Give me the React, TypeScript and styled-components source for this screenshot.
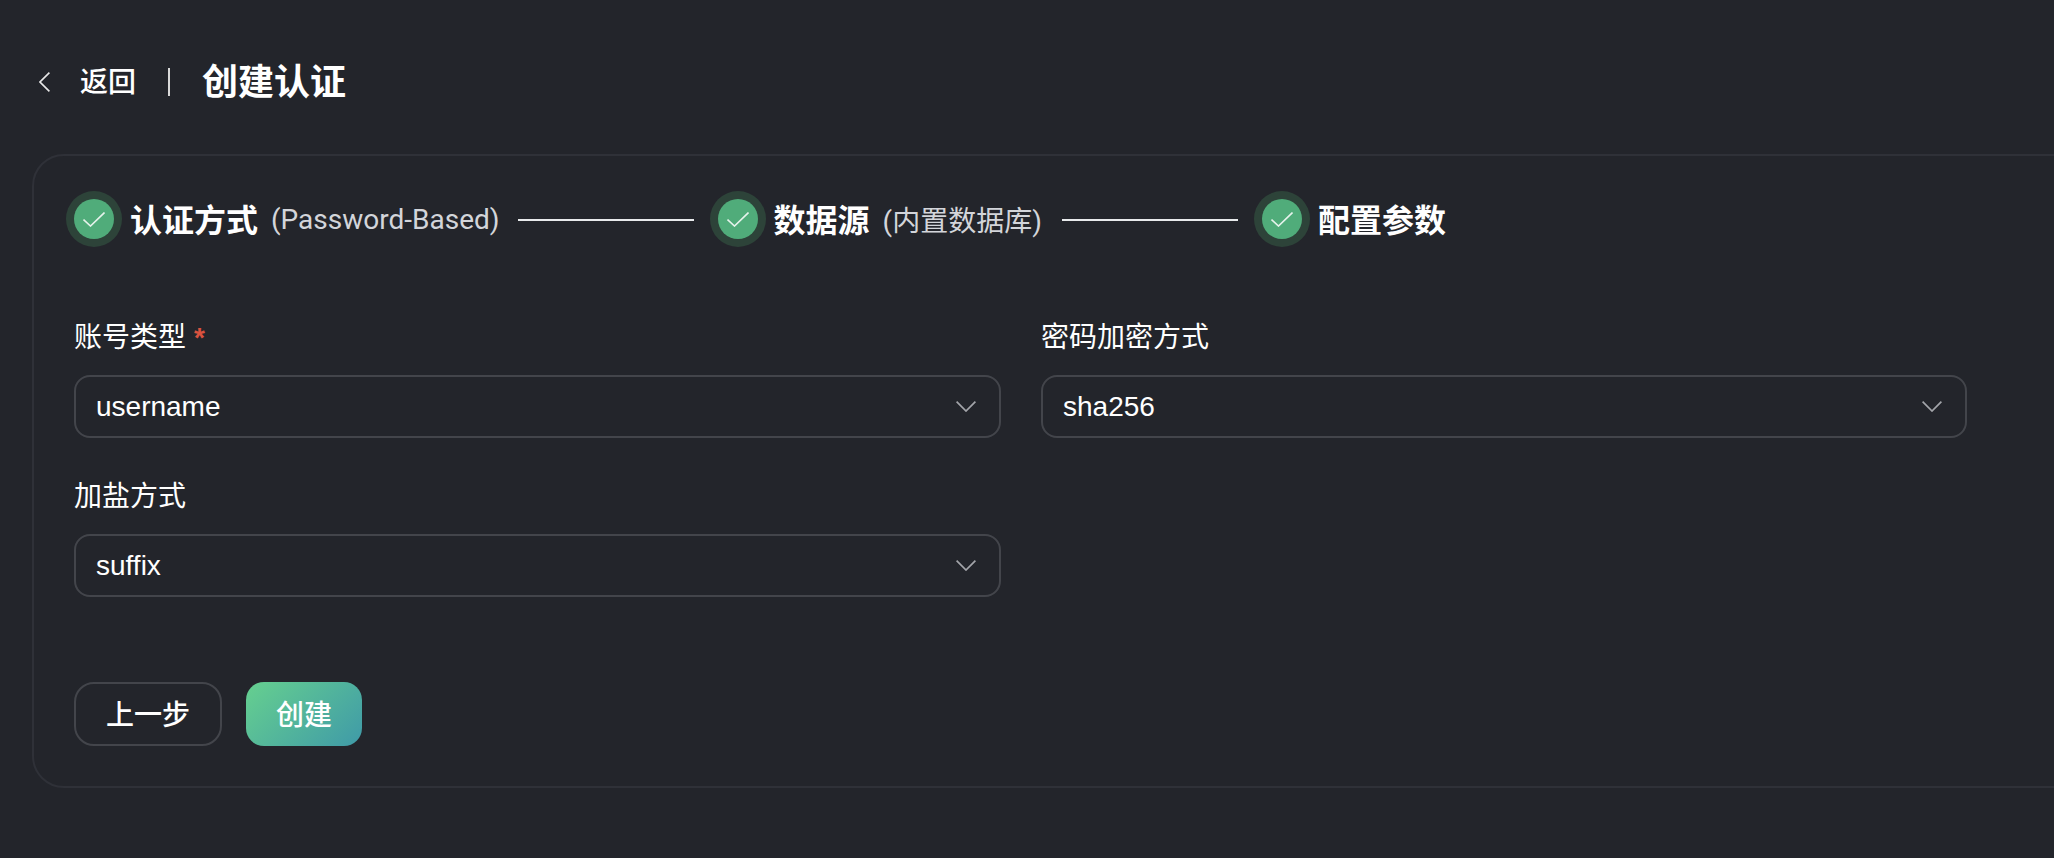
import React from "react";
import styled, { createGlobalStyle } from "styled-components";

const Global = createGlobalStyle`
  html, body { margin: 0; padding: 0; background: #23252b; overflow: hidden; }
  body { font-family: "Liberation Sans", "Noto Sans CJK SC", sans-serif; color: #fff; }
  * { box-sizing: border-box; }
`;

const Page = styled.div`
  width: 2054px;
  height: 858px;
  padding: 54px 0 0 32px;
  background: #23252b;
  overflow: hidden;
`;

const Header = styled.header`
  display: flex;
  align-items: center;
  height: 56px;
`;

const BackIcon = styled.svg`
  width: 11px;
  height: 20px;
  margin-left: 7px;
  color: #e8e8e8;
`;

const BackText = styled.span`
  margin: 0 0 4px 30px;
  font-size: 28px;
  font-weight: 500;
`;

const Divider = styled.span`
  width: 2px;
  height: 28px;
  margin: 0 32px 0 32px;
  background: #d9d9d9;
`;

const Title = styled.h1`
  margin: 0 0 7px;
  font-size: 36px;
  font-weight: 700;
`;

const Card = styled.section`
  width: 2100px;
  height: 634px;
  margin-top: 44px;
  padding: 35px 40px 0 40px;
  border: 2px solid #2f3138;
  border-radius: 32px;
`;

const Steps = styled.ol`
  display: flex;
  align-items: center;
  margin: 0 0 0 -8px;
  padding: 0;
  list-style: none;
`;

const Step = styled.li`
  display: flex;
  align-items: center;
  height: 56px;
`;

const StepBadge = styled.span`
  display: flex;
  align-items: center;
  justify-content: center;
  width: 56px;
  height: 56px;
  border-radius: 50%;
  background: #2d4339;
`;

const StepDot = styled.span`
  display: flex;
  align-items: center;
  justify-content: center;
  width: 40px;
  height: 40px;
  border-radius: 50%;
  background: #50ac7a;
`;

const StepName = styled.span`
  margin: 0 0 2px 8px;
  font-size: 32px;
  font-weight: 700;
`;

const StepNote = styled.span`
  margin: 0 0 0 13px;
  font-family: Roboto, "Noto Sans CJK SC", sans-serif;
  font-size: 28px;
  color: #d3d5da;
`;

const Connector = styled.span<{ $lead: number }>`
  width: 176px;
  height: 2px;
  margin: 2px 16px 0 ${(p) => p.$lead}px;
  background: #e8eaec;
`;

const FormGrid = styled.div`
  display: grid;
  grid-template-columns: 927px 926px;
  column-gap: 40px;
  row-gap: 40px;
  margin-top: 72px;
`;

const Field = styled.div`
  display: flex;
  flex-direction: column;
`;

const Label = styled.label`
  height: 40px;
  margin-bottom: 16px;
  font-size: 28px;
  line-height: 38px;
  color: #fff;
`;

const Required = styled.span`
  margin-left: 8px;
  font-weight: 700;
  color: #d9523f;
`;

const Select = styled.div`
  display: flex;
  align-items: center;
  justify-content: space-between;
  height: 63px;
  padding: 0 23px 0 20px;
  border: 2px solid #43454b;
  border-radius: 16px;
  font-size: 28px;
  color: #fff;
`;

const Chevron = styled.svg`
  width: 20px;
  height: 11px;
  color: #a3a5aa;
`;

const Actions = styled.div`
  display: flex;
  gap: 24px;
  margin-top: 85px;
`;

const Button = styled.button<{ $primary?: boolean }>`
  height: 64px;
  padding: 0 0 3px;
  width: ${(p) => (p.$primary ? "116px" : "148px")};
  border: ${(p) => (p.$primary ? "none" : "2px solid #43454b")};
  border-radius: ${(p) => (p.$primary ? "18px" : "20px")};
  background: ${(p) =>
    p.$primary ? "linear-gradient(135deg, #66d08f 0%, #3f9aa8 100%)" : "transparent"};
  color: #fff;
  font-family: inherit;
  font-size: 28px;
  font-weight: 500;
`;

const Check = () => (
  <svg width="22" height="15" viewBox="0 0 22 15" fill="none">
    <path d="M0.5 7.5L7.5 14L21.5 0.5" stroke="#e6f3ec" strokeWidth="1.6" />
  </svg>
);

const Down = () => (
  <Chevron viewBox="0 0 20 11" fill="none">
    <path d="M0.6 0.6L10 10L19.4 0.6" stroke="currentColor" strokeWidth="1.7" />
  </Chevron>
);

const steps = [
  { name: "认证方式", note: "(Password-Based)", lead: 18 },
  { name: "数据源", note: "(内置数据库)", lead: 20 },
  { name: "配置参数" },
];

export default function App() {
  return (
    <Page>
      <Global />
      <Header>
        <BackIcon viewBox="0 0 11 20" fill="none">
          <path d="M10.4 0.6L1 10L10.4 19.4" stroke="currentColor" strokeWidth="1.6" />
        </BackIcon>
        <BackText>返回</BackText>
        <Divider />
        <Title>创建认证</Title>
      </Header>
      <Card>
        <Steps>
          {steps.map((s) => (
            <React.Fragment key={s.name}>
              <Step>
                <StepBadge>
                  <StepDot>
                    <Check />
                  </StepDot>
                </StepBadge>
                <StepName>{s.name}</StepName>
                {s.note && <StepNote>{s.note}</StepNote>}
              </Step>
              {s.lead !== undefined && <Connector $lead={s.lead} />}
            </React.Fragment>
          ))}
        </Steps>
        <FormGrid>
          <Field>
            <Label>
              账号类型<Required>*</Required>
            </Label>
            <Select>
              username
              <Down />
            </Select>
          </Field>
          <Field>
            <Label>密码加密方式</Label>
            <Select>
              sha256
              <Down />
            </Select>
          </Field>
          <Field>
            <Label>加盐方式</Label>
            <Select>
              suffix
              <Down />
            </Select>
          </Field>
        </FormGrid>
        <Actions>
          <Button>上一步</Button>
          <Button $primary>创建</Button>
        </Actions>
      </Card>
    </Page>
  );
}
